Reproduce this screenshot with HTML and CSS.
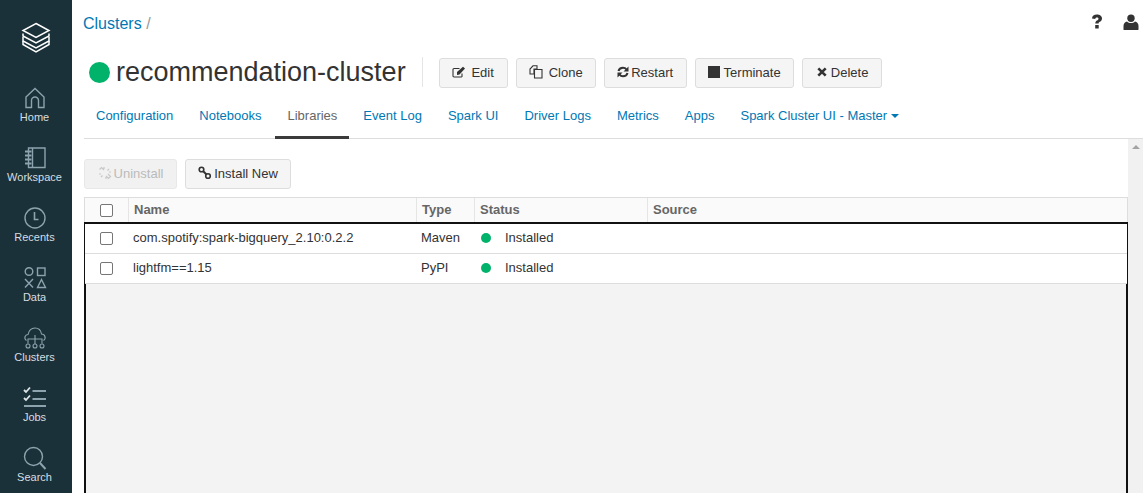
FILE: index.html
```html
<!DOCTYPE html>
<html>
<head>
    <title>recommendation-cluster</title>
    <link rel="stylesheet" href="styles.css">
</head>
<body>

<div id="sidebar">
    <div class="logo">
        <svg width="30" height="32" viewBox="0 0 30 32" fill="none" stroke="#fff" stroke-width="1.5">
            <path d="M15 1.5 28 8.5 15 15.5 2 8.5Z"/>
            <path d="M2 11.5V14L15 21 28 14V11.500"/>
            <path d="M2 15V19L15 26 28 19V15"/>
            <path d="M2 19V22.5L15 30 28 22.5V19"/>
        </svg>
    </div>
    <a class="nav-item">
        <svg width="24" height="24" viewBox="0 0 24 24" fill="none" stroke="#8da3ae" stroke-width="1.4">
            <path d="M3 11 12 2.500 21 11V21.500H15.500V14.500A3.500 3.500 0 0 0 8.500 14.500V21.500H3Z"/>
        </svg>
        <span>Home</span>
    </a>
    <a class="nav-item">
        <svg width="24" height="24" viewBox="0 0 24 24" fill="none" stroke="#8da3ae" stroke-width="1.4">
            <path d="M5.500 2H22V21.500H5.500Z"/>
            <path d="M9.500 2V21.500"/>
            <path d="M2 5.500H8.500M2 9.500H8.500M2 13.500H8.500M2 17.500H8.500" stroke-width="2"/>
        </svg>
        <span>Workspace</span>
    </a>
    <a class="nav-item">
        <svg width="24" height="24" viewBox="0 0 24 24" fill="none" stroke="#8da3ae" stroke-width="1.4">
            <circle cx="12" cy="12" r="10"/>
            <path d="M11.500 6V13.500H15.500" stroke-width="1.600"/>
        </svg>
        <span>Recents</span>
    </a>
    <a class="nav-item">
        <svg width="24" height="24" viewBox="0 0 24 24" fill="none" stroke="#8da3ae" stroke-width="1.4">
            <circle cx="6" cy="5.500" r="3.800"/>
            <rect x="14.500" y="2" width="7.500" height="7.500"/>
            <path d="M2 13 10 21.500M10 13 2 21.500"/>
            <path d="M18.500 13.500 22.500 21.500H14.500Z"/>
        </svg>
        <span>Data</span>
    </a>
    <a class="nav-item">
        <svg width="24" height="24" viewBox="0 0 24 24" fill="none" stroke="#8da3ae" stroke-width="1.100">
            <path d="M3.500 14.500C.5 12.500 2 8.500 5 8.500 6 4 9 2 12 2 16 2 18 5 18.500 8 22 8 23.500 12.500 20.500 14.500"/>
            <path d="M12 9V18M5 17.500V13H19V17.500"/>
            <circle cx="5" cy="20" r="2"/>
            <circle cx="12" cy="20" r="2"/>
            <circle cx="19" cy="20" r="2"/>
        </svg>
        <span>Clusters</span>
    </a>
    <a class="nav-item">
        <svg width="24" height="24" viewBox="0 0 24 24" fill="none" stroke="#8da3ae">
            <path d="M1 4 3 6 7 1.500M1 12 3 14 7 9.500" stroke="#dfe6e9" stroke-width="1.800"/>
            <path d="M9.500 5H23M9.500 13H23M1 20H23" stroke-width="2"/>
        </svg>
        <span>Jobs</span>
    </a>
    <a class="nav-item">
        <svg width="24" height="24" viewBox="0 0 24 24" fill="none" stroke="#8da3ae" stroke-width="1.4">
            <circle cx="10.500" cy="10.500" r="9"/>
            <path d="M17 17 22.500 23" stroke-width="2"/>
        </svg>
        <span>Search</span>
    </a>
</div>

<div id="main">
    <div class="topbar">
        <div class="breadcrumb"><a>Clusters</a> <span>/</span></div>
        <div class="top-icons">
            <svg width="12" height="15" viewBox="0 0 12 15" fill="#333">
                <path d="M1 4.500C1 1.800 3.200.5 5.800.5 8.700.5 11 2 11 4.500 11 6.500 9.800 7.200 8.500 8 7.700 8.500 7.600 8.800 7.600 9.500H4.300C4.300 8 4.800 7.200 5.900 6.500 6.900 5.900 7.500 5.500 7.500 4.700 7.500 3.900 6.800 3.400 5.900 3.400 4.900 3.400 4.300 4 4.200 5L1 4.500Z"/>
                <rect x="4.200" y="11" width="3.500" height="3.500"/>
            </svg>
            <svg width="16" height="16" viewBox="0 0 16 16" fill="#333">
                <circle cx="8" cy="4.300" r="3.700"/>
                <path d="M1 16C.5 16 .5 15.500.5 15V12C.5 9.500 2 8 4 7.500 5 8.500 6.500 9 8 9 9.500 9 11 8.500 12 7.500 14 8 15.500 9.500 15.500 12V15C15.500 15.500 15.500 16 15 16Z"/>
            </svg>
        </div>
    </div>

    <div class="title-row">
        <span class="status-dot"></span>
        <h1>recommendation-cluster</h1>
        <div class="title-sep"></div>
        <div class="actions">
            <button class="btn btn-edit">
                <svg width="14" height="12" viewBox="0 0 14 12" fill="none" stroke="#333" stroke-width="1.100">
                    <path d="M10 7.500V10.500A1 1 0 0 1 9 11H2A1 1 0 0 1 1 10V3.500A1 1 0 0 1 2 2.500H7.500"/>
                    <path d="M5 6 11 .8 13 2.500 7.500 8.500 5 9Z" fill="#333" stroke="none"/>
                </svg>
                Edit
            </button>
            <button class="btn btn-clone">
                <svg width="14" height="14" viewBox="0 0 14 14" fill="none" stroke="#333" stroke-width="1.100">
                    <path d="M4 .8H8V4H5V9H1V4Z"/>
                    <path d="M5.500 4.500H9.500L13 4.500V13H5.500Z"/>
                </svg>
                Clone
            </button>
            <button class="btn btn-restart">
                <svg width="12" height="12" viewBox="0 0 12 12" fill="none" stroke="#333" stroke-width="2">
                    <path d="M1.500 5C2 3 3.800 1.700 6 1.700 7.500 1.700 8.700 2.400 9.500 3.500"/>
                    <path d="M10.500 7C10 9 8.200 10.300 6 10.300 4.500 10.300 3.300 9.600 2.500 8.500"/>
                    <path d="M11.500 .5V5.500H6.500ZM.5 11.500V6.500H5.500Z" fill="#333" stroke="none"/>
                </svg>
                Restart
            </button>
            <button class="btn btn-terminate">
                <span class="stop-square"></span>
                Terminate
            </button>
            <button class="btn btn-delete">
                <svg width="10" height="10" viewBox="0 0 10 10" fill="none" stroke="#333" stroke-width="2.600">
                    <path d="M1.300 1.300 8.700 8.700M8.700 1.300 1.300 8.700"/>
                </svg>
                Delete
            </button>
        </div>
    </div>

    <div class="tabs">
        <a class="tab">Configuration</a>
        <a class="tab">Notebooks</a>
        <a class="tab active">Libraries</a>
        <a class="tab">Event Log</a>
        <a class="tab">Spark UI</a>
        <a class="tab">Driver Logs</a>
        <a class="tab">Metrics</a>
        <a class="tab">Apps</a>
        <a class="tab">Spark Cluster UI - Master <i class="caret"></i></a>
    </div>

    <div class="content">
        <div class="pane">
            <div class="toolbar">
                <button class="btn btn-uninstall" disabled>
                    <svg width="14" height="14" viewBox="0 0 14 14" fill="none" stroke="#bbb" stroke-width="1.200">
                        <path d="M1.500 3.500 3.500 1.500 6 4M8 10 10.500 12.500 12.500 10.500 10 8M1 8H3M6 1V3M8 11V13M11 6H13M3 11 4.500 9.500M9.500 4.500 11 3"/>
                    </svg>
                    Uninstall
                </button>
                <button class="btn btn-install">
                    <svg width="14" height="14" viewBox="0 0 14 14" fill="none" stroke="#333" stroke-width="1.600">
                        <circle cx="3.500" cy="3.500" r="2.300"/>
                        <circle cx="10" cy="10" r="2.300"/>
                        <path d="M5 5 8.500 8.500" stroke-width="2"/>
                    </svg>
                    Install New
                </button>
            </div>

            <div class="table">
                <div class="thead">
                    <div class="th th-check"><span class="checkbox"></span></div>
                    <div class="th">Name</div>
                    <div class="th">Type</div>
                    <div class="th">Status</div>
                    <div class="th">Source</div>
                </div>
                <div class="tbody">
                    <div class="row">
                        <div class="td td-check"><span class="checkbox"></span></div>
                        <div class="td">com.spotify:spark-bigquery_2.10:0.2.2</div>
                        <div class="td">Maven</div>
                        <div class="td td-status"><span class="dot"></span>Installed</div>
                        <div class="td"></div>
                    </div>
                    <div class="row">
                        <div class="td td-check"><span class="checkbox"></span></div>
                        <div class="td">lightfm==1.15</div>
                        <div class="td">PyPI</div>
                        <div class="td td-status"><span class="dot"></span>Installed</div>
                        <div class="td"></div>
                    </div>
                    <div class="table-rest"></div>
                </div>
            </div>
        </div>
        <div class="scrollbar"><i class="arrow-up"></i></div>
    </div>
</div>

</body>
</html>
```

FILE: styles.css
```css
* {
  box-sizing: border-box;
}

html, body {
  height: 100%;
}

body {
  margin: 0;
  padding: 0;
  display: flex;
  overflow: hidden;
  font-family: "Liberation Sans", Arial, sans-serif;
  font-size: 13px;
  color: #333;
  background-color: #fff;
}

a {
  color: #0078b4;
}

/* left nav */
#sidebar {
  width: 72px;
  flex: none;
  background-color: #1b3139;
  display: flex;
  flex-direction: column;
  align-items: center;
}

.logo {
  height: 77px;
  padding-top: 22px;
  display: flex;
  justify-content: center;
  flex: none;
}

.nav-item {
  width: 100%;
  height: 60px;
  flex: none;
  display: flex;
  flex-direction: column;
  align-items: center;
  padding: 9px 3px 0 0;
  color: #d5dde1;
  font-size: 11px;
  line-height: 13px;
}

.nav-item svg {
  margin-bottom: 1px;
}

/* header */
#main {
  flex: 1;
  min-width: 0;
  display: flex;
  flex-direction: column;
}

.topbar {
  height: 48px;
  flex: none;
  display: flex;
  justify-content: space-between;
  padding: 14px 7px 0 11px;
}

.breadcrumb {
  font-size: 16px;
  line-height: 20px;
}

.breadcrumb span {
  color: #999;
}

.top-icons {
  display: flex;
  gap: 20px;
  align-items: flex-start;
}

.title-row {
  height: 48px;
  flex: none;
  display: flex;
  align-items: center;
  padding-left: 17px;
}

.status-dot {
  width: 21px;
  height: 21px;
  border-radius: 50%;
  background-color: #00b26a;
  margin-right: 6px;
}

h1 {
  margin: 0;
  font-size: 27px;
  font-weight: normal;
  line-height: 32px;
  color: #333;
}

.title-sep {
  width: 1px;
  height: 30px;
  background-color: #e5e5e5;
  margin: 0 16px;
}

.actions {
  display: flex;
  gap: 8px;
  margin-top: 2px;
}

.btn {
  height: 30px;
  display: inline-flex;
  align-items: center;
  justify-content: center;
  gap: 4px;
  background-color: #f5f5f5;
  border: 1px solid #ddd;
  border-radius: 3px;
  font-family: inherit;
  font-size: 13px;
  color: #333;
  padding: 0 0 2px;
}

.btn-edit { width: 69px; gap: 5px; }
.btn-clone { width: 80px; gap: 6px; }
.btn-restart { width: 83px; gap: 2px; }
.btn-terminate { width: 99px; }
.btn-delete { width: 80px; padding-left: 2px; }

.stop-square {
  width: 12px;
  height: 12px;
  background-color: #333;
}

/* tabs */
.tabs {
  height: 43px;
  flex: none;
  display: flex;
  border-bottom: 1px solid #ddd;
  margin-right: 3px;
  margin-left: 12px;
}

.tab {
  padding: 0 12.500px;
  margin-right: 1px;
  line-height: 39px;
  height: 43px;
  white-space: nowrap;
  color: #0078b4;
}

.tab:first-child {
  padding-left: 12px;
}

.tab.active {
  color: #666;
  padding-right: 12px;
  margin-right: 1.500px;
  border-bottom: 3px solid #3b3b3b;
}

.caret {
  display: inline-block;
  width: 0;
  height: 0;
  vertical-align: 2px;
  border-top: 4px solid #0078b4;
  border-left: 4px solid transparent;
  border-right: 4px solid transparent;
}

/* library list */
.content {
  flex: 1;
  min-height: 0;
  display: flex;
  padding-right: 3px;
}

.pane {
  flex: 1;
  min-width: 0;
  padding: 20px 0 0 12px;
  display: flex;
  flex-direction: column;
}

.toolbar {
  display: flex;
  gap: 8px;
  margin-bottom: 8px;
  flex: none;
}

.btn-uninstall {
  width: 93px;
  gap: 2px;
  color: #aaa;
  background-color: #eee;
  border-color: #e3e3e3;
  opacity: .8;
}

.btn-install {
  width: 106px;
  gap: 2px;
}

.table {
  flex: 1;
  display: flex;
  flex-direction: column;
  min-height: 0;
}

.thead, .row {
  display: grid;
  grid-template-columns: 43px 288px 58px 173px 1fr;
  flex: none;
}

.thead {
  height: 26px;
  background-color: #fafafa;
  border: 1px solid #ddd;
  border-bottom: 0;
}

.th {
  font-weight: bold;
  color: #666;
  line-height: 24px;
  padding-left: 5px;
  height: 25px;
  border-left: 1px solid #e5e5e5;
}

.th:first-child {
  border-left: 0;
}

.th-check, .td-check {
  display: flex;
  align-items: center;
  justify-content: center;
  padding-left: 0;
}

.tbody {
  flex: 1;
  display: flex;
  flex-direction: column;
  border-top: 2px solid #111;
  margin-top: -1px;
  border-left: 1px solid #111;
  border-right: 1px solid #111;
}

.row {
  height: 30px;
  border-bottom: 1px solid #ddd;
  color: #333;
}

.td {
  padding-left: 5px;
  line-height: 28px;
  height: 29px;
}

.td-check {
  padding-left: 0;
}

.td-status {
  display: flex;
  align-items: center;
  padding-left: 7px;
  padding-bottom: 1px;
}

.dot {
  width: 10px;
  height: 10px;
  border-radius: 50%;
  background-color: #00b26a;
  margin-right: 14px;
}

.checkbox {
  width: 13px;
  height: 13px;
  border: 1px solid #767676;
  border-radius: 2px;
  background-color: #fff;
}

.table-rest {
  flex: 1;
  background-color: #f3f3f3;
  margin: 0 -1px;
  border-left: 2px solid #111;
  border-right: 2px solid #111;
}

.scrollbar {
  width: 15px;
  flex: none;
  background-color: #f1f1f1;
  display: flex;
  justify-content: center;
  padding-top: 6px;
}

.arrow-up {
  width: 0;
  height: 0;
  border-bottom: 4px solid #a3a3a3;
  border-left: 4px solid transparent;
  border-right: 4px solid transparent;
}
```
